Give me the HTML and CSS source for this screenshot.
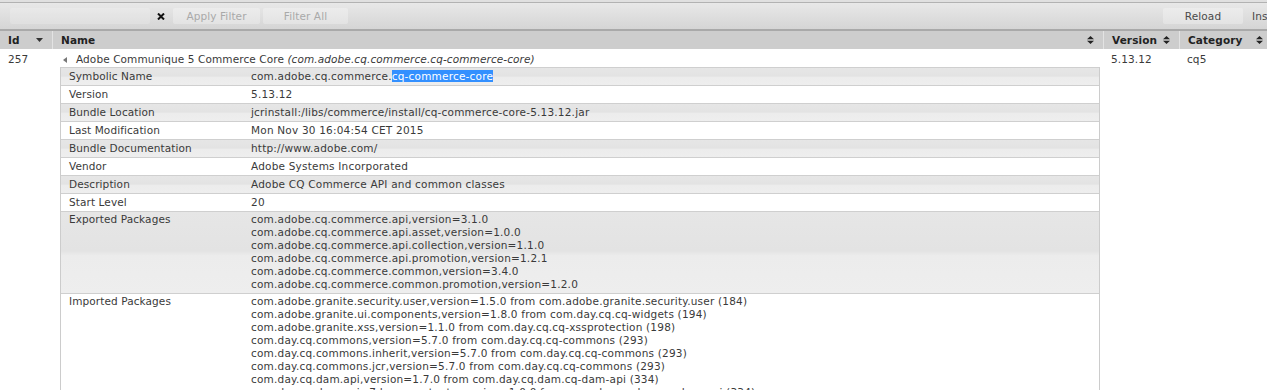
FILE: index.html
```html
<!DOCTYPE html>
<html lang="en">
<head>
<meta charset="utf-8">
<title>Bundles</title>
<link rel="stylesheet" href="styles.css">
</head>
<body>
<div class="toolbar">
  <div class="filter-box"></div>
  <span class="clear-x"><svg width="8" height="7" viewBox="0 0 8 7"><path d="M1 0.5 L7 6.5 M7 0.5 L1 6.5" stroke="#111" stroke-width="2"/></svg></span>
  <span class="btn btn-off btn-apply">Apply Filter</span>
  <span class="btn btn-off btn-all">Filter All</span>
  <span class="spacer"></span>
  <span class="btn btn-reload">Reload</span>
  <span class="btn-install">Install/Update...</span>
</div>
<table class="bundles">
  <colgroup>
    <col class="w-id"><col class="w-name"><col class="w-ver"><col class="w-cat">
  </colgroup>
  <thead>
    <tr>
      <th><div class="th-in"><span>Id</span><svg class="sort" width="7" height="4" viewBox="0 0 7 4"><path d="M0 0 L7 0 L3.5 4Z" fill="#333"/></svg></div></th>
      <th class="sep"><div class="th-in"><span>Name</span><svg class="sort" width="7" height="8" viewBox="0 0 7 8"><path d="M0 3.3 L3.5 0 L7 3.3Z M0 4.7 L3.5 8 L7 4.7Z" fill="#222"/></svg></div></th>
      <th class="sep"><div class="th-in"><span>Version</span><svg class="sort" width="7" height="8" viewBox="0 0 7 8"><path d="M0 3.3 L3.5 0 L7 3.3Z M0 4.7 L3.5 8 L7 4.7Z" fill="#222"/></svg></div></th>
      <th class="sep"><div class="th-in"><span>Category</span><svg class="sort" width="7" height="8" viewBox="0 0 7 8"><path d="M0 3.3 L3.5 0 L7 3.3Z M0 4.7 L3.5 8 L7 4.7Z" fill="#222"/></svg></div></th>
    </tr>
  </thead>
  <tbody>
    <tr>
      <td class="c-id">257</td>
      <td class="c-name">
        <div class="name-line"><svg class="toggle" width="4" height="6" viewBox="0 0 4 6"><path d="M4 0 L0 3 L4 6Z" fill="#777"/></svg><span>Adobe Communique 5 Commerce Core <em>(com.adobe.cq.commerce.cq-commerce-core)</em></span></div>
        <table class="details">
          <colgroup><col class="w-label"><col></colgroup>
          <tr class="alt"><td>Symbolic Name</td><td class="val">com.adobe.cq.commerce.<span class="sel">cq-commerce-core</span></td></tr>
          <tr><td>Version</td><td class="val">5.13.12</td></tr>
          <tr class="alt"><td>Bundle Location</td><td class="val">jcrinstall:/libs/commerce/install/cq-commerce-core-5.13.12.jar</td></tr>
          <tr><td>Last Modification</td><td class="val">Mon Nov 30 16:04:54 CET 2015</td></tr>
          <tr class="alt"><td>Bundle Documentation</td><td class="val">http://www.adobe.com/</td></tr>
          <tr><td>Vendor</td><td class="val">Adobe Systems Incorporated</td></tr>
          <tr class="alt"><td>Description</td><td class="val">Adobe CQ Commerce API and common classes</td></tr>
          <tr><td>Start Level</td><td class="val">20</td></tr>
          <tr class="alt multi"><td>Exported Packages</td><td class="val">com.adobe.cq.commerce.api,version=3.1.0<br>com.adobe.cq.commerce.api.asset,version=1.0.0<br>com.adobe.cq.commerce.api.collection,version=1.1.0<br>com.adobe.cq.commerce.api.promotion,version=1.2.1<br>com.adobe.cq.commerce.common,version=3.4.0<br>com.adobe.cq.commerce.common.promotion,version=1.2.0</td></tr>
          <tr class="multi"><td>Imported Packages</td><td class="val">com.adobe.granite.security.user,version=1.5.0 from com.adobe.granite.security.user (184)<br>com.adobe.granite.ui.components,version=1.8.0 from com.day.cq.cq-widgets (194)<br>com.adobe.granite.xss,version=1.1.0 from com.day.cq.cq-xssprotection (198)<br>com.day.cq.commons,version=5.7.0 from com.day.cq.cq-commons (293)<br>com.day.cq.commons.inherit,version=5.7.0 from com.day.cq.cq-commons (293)<br>com.day.cq.commons.jcr,version=5.7.0 from com.day.cq.cq-commons (293)<br>com.day.cq.dam.api,version=1.7.0 from com.day.cq.dam.cq-dam-api (334)<br>com.day.cq.dam.api.s7dam.constants,version=1.0.0 from com.day.cq.dam.cq-dam-api (334)<br>com.day.cq.dam.commons.util,version=5.7.0 from com.day.cq.dam.cq-dam-commons (336)</td></tr>
        </table>
      </td>
      <td class="c-ver">5.13.12</td>
      <td class="c-cat">cq5</td>
    </tr>
  </tbody>
</table>
</body>
</html>
```
FILE: styles.css
```css
html, body {
  margin: 0;
  padding: 0;
  background: #ffffff;
  overflow: hidden;
}
body {
  font-family: "DejaVu Sans", Verdana, sans-serif;
  font-size: 10.5px;
  line-height: 13px;
  letter-spacing: 0.1px;
  color: #3a3a3a;
}

.toolbar {
  width: 1348px;
  height: 26px;
  margin-top: 2px;
  box-shadow: 0 -2px 0 #e0e0e0;
  border-top: 1px solid #b2b2b2;
  border-bottom: 2px solid #a9a9a9;
  background: linear-gradient(#e8e8e8, #d5d5d5);
  display: flex;
  align-items: center;
  padding: 0 8px;
  box-sizing: content-box;
}
.filter-box {
  width: 140px;
  height: 16px;
  margin-left: 2px;
  background: rgba(255,255,255,0.18);
  border-radius: 2px;
}
.clear-x {
  display: flex;
  margin-left: 7px;
  margin-right: 8px;
}
.btn {
  height: 16px;
  line-height: 16px;
  text-align: center;
  border-radius: 2px;
  background: linear-gradient(#ececec, #e3e3e3);
  white-space: nowrap;
  flex: none;
}
.btn-off { color: #a9a9a9; }
.btn-apply { width: 87px; }
.btn-all { width: 85px; margin-left: 3px; }
.spacer { flex: 1; }
.btn-reload { width: 80px; color: #4a4a4a; }
.btn-install {
  flex: none;
  width: 104px;
  margin-left: 3px;
  padding-left: 6px;
  color: #4a4a4a;
  white-space: nowrap;
  line-height: 16px;
}

.bundles {
  width: 1272px;
  table-layout: fixed;
  border-collapse: separate;
  border-spacing: 0;
}
.w-id { width: 52px; }
.w-name { width: 1051px; }
.w-ver { width: 76px; }
.w-cat { width: 93px; }

.bundles th {
  height: 18px;
  padding: 0 9px 0 8px;
  background: #cdcdcd;
  font-weight: bold;
  color: #222;
  text-align: left;
  box-sizing: border-box;
}
.bundles th.sep { border-left: 1px solid #e3e3e3; }
.th-in {
  display: flex;
  align-items: center;
  justify-content: space-between;
}
.sort { display: block; }

.bundles > tbody > tr > td {
  vertical-align: top;
  padding: 4px 8px 0 8px;
}
.bundles > tbody > tr > td.c-name { padding: 4px 3px 0 8px; }
.c-ver, .c-cat { color: #3a3a3a; }

.name-line {
  display: flex;
  align-items: center;
  height: 13px;
  margin-bottom: 1px;
}
.toggle { margin: 0 9px 0 3px; }
.name-line em { font-style: italic; }

.details {
  width: 100%;
  table-layout: fixed;
  border-collapse: separate;
  border-spacing: 0;
  border-left: 1px solid #cccccc;
  border-right: 1px solid #cccccc;
}
.w-label { width: 182px; }
.details td {
  border-top: 1px solid #cfcfcf;
  padding: 2px 8px 2px 8px;
  vertical-align: top;
  white-space: nowrap;
}
.details td.val { letter-spacing: 0.2px; }
.details tr.alt td {
  background: linear-gradient(#e6e6e6 0%, #e3e3e3 48%, #ececec 54%, #eeeeee 100%);
}
.details tr.multi td { padding: 1px 8px 2px 8px; }
.sel {
  background: #3390ff;
  color: #ffffff;
}
```
